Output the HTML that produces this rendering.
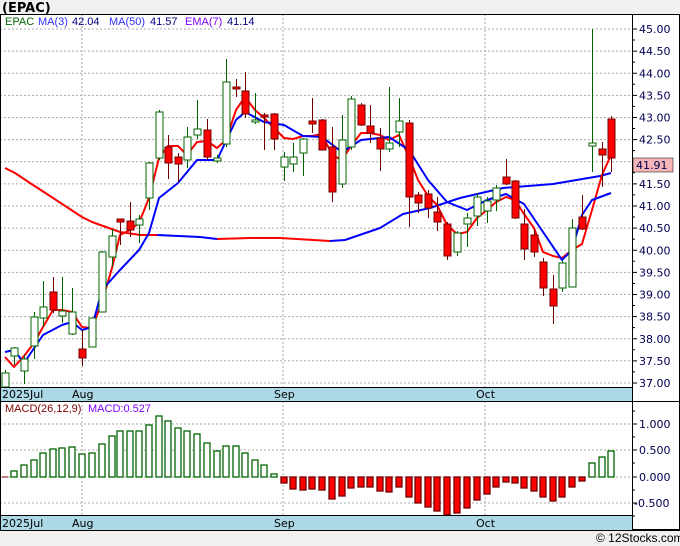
<!DOCTYPE html>
<html><head><meta charset="utf-8"><style>
html,body{margin:0;padding:0;background:#f0f0f0;}
svg{display:block;font-family:"Liberation Sans",sans-serif;}
</style></head><body>
<svg id="s" width="680" height="546" xmlns="http://www.w3.org/2000/svg">
<rect x="0" y="0" width="680" height="546" fill="#f0f0f0"/>
<rect x="0" y="14" width="680" height="516" fill="#fff"/>
<text x="2" y="12" font-size="13" font-weight="bold" fill="#000" font-family="DejaVu Sans, sans-serif">(EPAC)</text>
<g id="grid"></g>
<g id="lines"></g>
<g id="cand"></g>
<g id="macd"></g>
<rect x="0.5" y="14.5" width="679" height="515" fill="none" stroke="#000"/>
<line x1="632.5" y1="14" x2="632.5" y2="530" stroke="#000"/>
<rect x="1" y="388" width="631" height="13" fill="#add8e6"/>
<line x1="0" y1="387.5" x2="632" y2="387.5" stroke="#000"/>
<line x1="0" y1="401.5" x2="680" y2="401.5" stroke="#000"/>
<rect x="1" y="516" width="631" height="14" fill="#add8e6"/>
<line x1="0" y1="515.5" x2="632" y2="515.5" stroke="#000"/>
<line x1="0" y1="530.5" x2="680" y2="530.5" stroke="#000"/>
<g font-size="11" fill="#000" font-family="DejaVu Sans, sans-serif">
<text x="2" y="398">2025Jul</text><text x="72" y="398">Aug</text><text x="274" y="398">Sep</text><text x="476" y="398">Oct</text>
<text x="2" y="527">2025Jul</text><text x="72" y="527">Aug</text><text x="274" y="527">Sep</text><text x="476" y="527">Oct</text>
</g>
<g font-size="11">
<text x="5" y="25" fill="#006400">EPAC</text>
<text x="38" y="25" fill="#3030ff">MA(3)</text><text x="72" y="25" fill="#000080">42.04</text>
<text x="109" y="25" fill="#3030ff">MA(50)</text><text x="150" y="25" fill="#000080">41.57</text>
<text x="185" y="25" fill="#8000ff">EMA(7)</text><text x="227" y="25" fill="#000080">41.14</text>
<text x="5" y="412" fill="#800000">MACD(26,12,9)</text><text x="88" y="412" fill="#8000ff">MACD:0.527</text>
</g>
<g id="axis" font-size="11" fill="#000050" font-family="DejaVu Sans, sans-serif"></g>
<rect x="633" y="158" width="40" height="14" fill="#f4b6b6" stroke="#000" stroke-width="0.5"/>
<text x="636" y="169" font-size="11" fill="#000050" font-family="DejaVu Sans, sans-serif">41.91</text>
<text x="596" y="542" font-size="12" fill="#000">© 12Stocks.com</text>
</svg>
<script>
var NS="http://www.w3.org/2000/svg";
function el(p,t,a){var e=document.createElementNS(NS,t);for(var k in a)e.setAttribute(k,a[k]);document.getElementById(p).appendChild(e);return e;}
for(var i=0;i<=16;i++){var y=29+i*22.125;el("grid","line",{x1:0,x2:632,y1:y,y2:y,stroke:"#aaa","stroke-dasharray":"2,2"});
el("axis","line",{x1:632,x2:637,y1:y,y2:y,stroke:"#000"});
if(i<16)el("axis","line",{x1:632,x2:635,y1:y+11,y2:y+11,stroke:"#000"});
var t=el("axis","text",{x:639,y:y+4});t.textContent=(45-i*0.5).toFixed(2);}
[82,283,485].forEach(function(x){el("grid","line",{x1:x,x2:x,y1:14,y2:387,stroke:"#aaa","stroke-dasharray":"2,2"});el("grid","line",{x1:x,x2:x,y1:401,y2:515,stroke:"#aaa","stroke-dasharray":"2,2"});});
[[424,"1.000"],[450,"0.500"],[477,"0.000"],[503,"-0.500"]].forEach(function(a){el("grid","line",{x1:0,x2:632,y1:a[0],y2:a[0],stroke:"#aaa","stroke-dasharray":"2,2"});el("axis","line",{x1:632,x2:637,y1:a[0],y2:a[0],stroke:"#000"});var t=el("axis","text",{x:a[1][0]=="-"?634:639,y:a[0]+4});t.textContent=a[1];});
[411,437,463,490,516].forEach(function(y){el("axis","line",{x1:632,x2:635,y1:y,y2:y,stroke:"#000"});});
var C=[[5,373,387,370,387,1],[14,348,356,347,365,1],[24,359,371,355,384,1],[34,317,346,312,359,1],[43,307,318,281,327,1],[53,292,310,277,313,0],[62,311,316,277,323,1],[72,312,334,288,335,1],[82,349,358,330,366,0],[92,318,347,318,347,1],[102,252,312,251,312,1],[112,236,257,229,267,1],[120,219,222,219,245,0],[130,221,230,202,237,0],[139,219,225,215,243,1],[149,163,198,162,210,1],[159,112,158,110,160,1],[168,147,163,135,179,0],[178,157,164,153,182,0],[187,137,160,127,168,1],[197,129,135,100,139,1],[207,130,157,119,160,0],[217,158,161,155,163,1],[226,82,144,59,147,1],[236,87,89,79,97,0],[245,91,114,72,118,0],[255,120,122,93,124,1],[264,115,117,113,150,0],[274,114,139,113,150,0],[284,157,167,152,181,1],[293,157,164,143,172,1],[303,139,153,138,176,1],[312,121,124,98,133,0],[322,120,150,119,150,0],[332,147,192,127,202,0],[342,140,184,115,188,1],[351,99,147,96,150,1],[361,105,125,103,126,0],[370,126,133,105,143,0],[380,138,149,128,171,0],[389,143,149,87,152,1],[399,121,132,98,147,1],[409,123,197,120,227,0],[418,195,203,192,213,0],[428,194,208,190,218,0],[437,212,222,197,231,0],[447,224,256,222,260,0],[457,233,252,231,256,1],[467,218,224,213,247,1],[477,197,216,193,226,1],[487,201,211,197,223,1],[496,188,200,185,211,1],[506,177,184,159,185,0],[515,181,218,180,219,0],[524,224,249,209,260,0],[534,235,252,229,257,0],[543,262,288,258,296,0],[553,289,306,275,324,0],[562,263,288,261,292,1],[572,228,287,219,287,1],[582,217,229,195,230,0],[592,143,146,29,172,1],[602,149,155,142,187,0],[611,119,158,116,172,0]];
C.forEach(function(c){var g=c[5];el("cand","line",{x1:c[0]+.5,x2:c[0]+.5,y1:c[3],y2:c[4],stroke:g?"#006400":"#700000"});
el("cand","rect",{x:c[0]-3,y:c[1],width:7,height:Math.max(2,c[2]-c[1]),fill:g?"#fff":"#f00",stroke:g?"#006400":"#700000"});});
function pl(pts,col,w){el("lines","polyline",{points:pts.map(function(p){return p.join(",")}).join(" "),fill:"none",stroke:col,"stroke-width":w||2,"stroke-linejoin":"round"});}
pl([[5,168],[15,173],[30,183],[50,196],[82,217],[92,222],[120,232],[140,235],[157,235]],"#f00");
pl([[157,235],[200,237],[217,239]],"#0000ff");
pl([[217,239],[250,238],[280,238],[330,241]],"#f00");
pl([[330,241],[345,240],[380,228],[403,214],[430,208],[460,198],[503,188],[553,184],[600,176],[611,173]],"#0000ff");
pl([[5,357],[14,367],[24,356],[34,343],[43,327],[53,310],[62,310],[72,312],[82,327],[92,328],[102,302],[112,268],[120,235],[130,230],[139,223],[149,198],[159,158],[168,146],[178,146],[187,155],[197,142],[207,141],[217,148],[226,140],[236,110],[245,97],[255,110],[264,118],[274,128],[284,138],[293,139],[303,136],[312,136],[322,134],[332,155],[342,160],[351,146],[361,133],[370,133],[380,135],[389,140],[399,135],[409,157],[418,180],[428,196],[437,205],[447,225],[457,234],[467,232],[477,218],[487,210],[496,202],[506,197],[515,200],[524,214],[534,228],[543,252],[553,256],[562,258],[572,250],[582,244],[592,210],[602,175],[611,155]],"#f00");
pl([[5,352],[14,350],[24,363],[43,335],[62,325],[72,322],[82,330],[92,327],[102,290],[120,270],[139,250],[149,233],[159,198],[178,183],[197,160],[217,160],[236,120],[245,112],[264,122],[284,125],[303,136],[322,137],[342,152],[361,140],[389,137],[409,150],[428,180],[447,202],[467,210],[487,200],[506,194],[524,204],[543,232],[562,260],[572,250],[582,215],[592,200],[611,193]],"#0000ff");
var M=[[14,471],[24,465],[34,460],[43,453],[53,449],[62,448],[72,447],[82,454],[92,453],[102,444],[112,436],[120,431],[130,431],[139,431],[149,425],[159,416],[168,421],[178,428],[187,431],[197,434],[207,443],[217,451],[226,446],[236,446],[245,453],[255,460],[264,465],[274,474],[284,483],[293,489],[303,490],[312,489],[322,490],[332,499],[342,496],[351,488],[361,487],[370,487],[380,491],[389,492],[399,487],[409,497],[418,503],[428,507],[437,511],[447,515],[457,513],[467,508],[477,500],[487,494],[496,487],[506,482],[515,483],[524,488],[534,491],[543,497],[553,501],[562,497],[572,487],[582,481],[592,463],[602,457],[611,451]];
el("macd","line",{x1:2,x2:8,y1:477,y2:477,stroke:"#800000"});
M.forEach(function(m){var up=m[1]<477;var y=up?m[1]:477,h=Math.abs(m[1]-477);
el("macd","rect",{x:m[0]-3,y:y,width:6,height:Math.max(1,h),fill:up?"#fff":"#f00",stroke:up?"#006400":"#700000","stroke-width":1.3});});
</script>
</body></html>
